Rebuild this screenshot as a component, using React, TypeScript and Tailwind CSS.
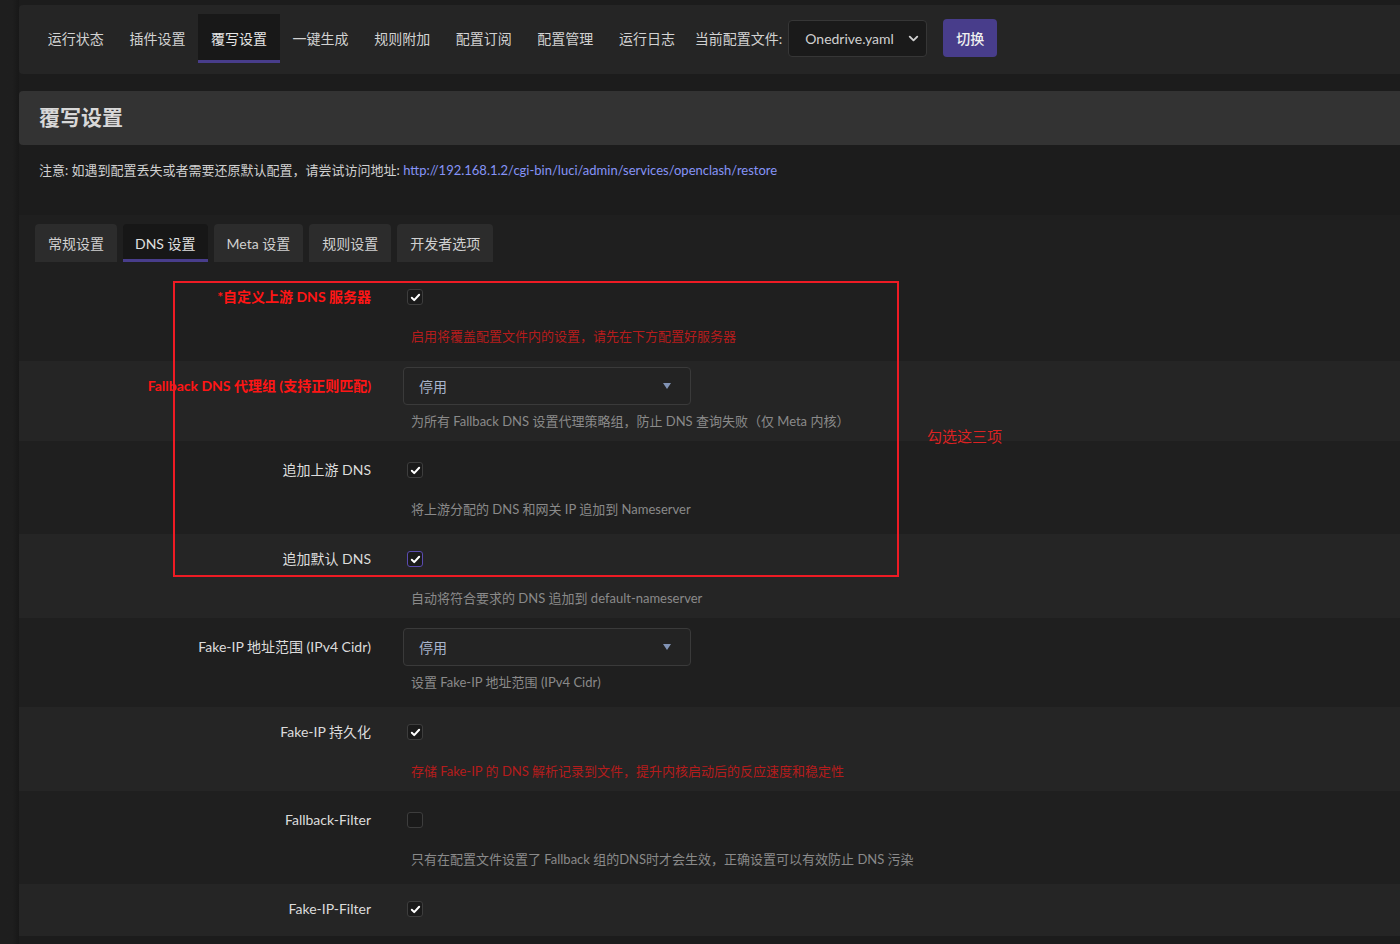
import { ChevronDown } from 'lucide-react';

interface Row {
  label: string;
  red?: boolean;
  type: 'check' | 'select';
  checked?: boolean;
  focus?: boolean;
  desc?: string;
  descRed?: boolean;
  pad: string;
}

const NAV_TABS = ['运行状态', '插件设置', '覆写设置', '一键生成', '规则附加', '配置订阅', '配置管理', '运行日志'];
const SUB_TABS = ['常规设置', 'DNS 设置', 'Meta 设置', '规则设置', '开发者选项'];

const ROWS: Row[] = [
  { label: '*自定义上游 DNS 服务器', red: true, type: 'check', checked: true, desc: '启用将覆盖配置文件内的设置，请先在下方配置好服务器', descRed: true, pad: 'pt-[16px] pb-[15px] bg-[#1f1f1f]' },
  { label: 'Fallback DNS 代理组 (支持正则匹配)', red: true, type: 'select', desc: '为所有 Fallback DNS 设置代理策略组，防止 DNS 查询失败（仅 Meta 内核）', pad: 'pt-[6px] pb-[10px] bg-[#252525]' },
  { label: '追加上游 DNS', type: 'check', checked: true, desc: '将上游分配的 DNS 和网关 IP 追加到 Nameserver', pad: 'pt-[10px] pb-[15px] bg-[#1f1f1f]' },
  { label: '追加默认 DNS', type: 'check', checked: true, focus: true, desc: '自动将符合要求的 DNS 追加到 default-nameserver', pad: 'pt-[6px] pb-[10px] bg-[#252525]' },
  { label: 'Fake-IP 地址范围 (IPv4 Cidr)', type: 'select', desc: '设置 Fake-IP 地址范围 (IPv4 Cidr)', pad: 'pt-[10px] pb-[15px] bg-[#1f1f1f]' },
  { label: 'Fake-IP 持久化', type: 'check', checked: true, desc: '存储 Fake-IP 的 DNS 解析记录到文件，提升内核启动后的反应速度和稳定性', descRed: true, pad: 'pt-[6px] pb-[10px] bg-[#252525]' },
  { label: 'Fallback-Filter', type: 'check', checked: false, desc: '只有在配置文件设置了 Fallback 组的DNS时才会生效，正确设置可以有效防止 DNS 污染', pad: 'pt-[10px] pb-[15px] bg-[#1f1f1f]' },
  { label: 'Fake-IP-Filter', type: 'check', checked: true, pad: 'pt-[6px] pb-[8px] bg-[#252525]' },
];

const Checkbox = ({ checked, focus }: { checked?: boolean; focus?: boolean }) => (
  <span
    className={`ml-[4px] flex h-[16px] w-[16px] items-center justify-center rounded-[3px] border bg-[#1a1a1a] ${
      focus ? 'border-[#5a4bb0]' : 'border-[#3d3d3d]'
    }`}
  >
    {checked && (
      <svg width="11" height="11" viewBox="0 0 12 12">
        <path d="M2 6.3l2.6 2.6L10 3" fill="none" stroke="#fff" strokeWidth="2.2" strokeLinecap="round" strokeLinejoin="round" />
      </svg>
    )}
  </span>
);

const Select = () => (
  <div className="flex h-[38px] w-[288px] items-center justify-between rounded-[4px] border border-[#3a3a3a] bg-[#232323] pl-[15px] pr-[19px]">
    <span className="text-[14px] text-[#a9b5cc]">停用</span>
    <svg width="8" height="6" viewBox="0 0 8 6">
      <path d="M0 0h8L4 6z" fill="#8193b5" />
    </svg>
  </div>
);

export default function App() {
  return (
    <div className="flex min-h-[944px] bg-[#1c1c1c] font-['Lato','Noto_Sans_CJK_SC',sans-serif] text-[#d4d4d4]">
      <aside className="w-[19px] shrink-0 bg-gradient-to-r from-[#1e1e1e] from-[65%] to-[#181818]" />

      <main className="min-w-0 flex-1 pt-[5px]">
        {/* top nav */}
        <nav className="flex h-[69px] items-center rounded-l-[4px] bg-[#252525] pb-[3px] pl-[16px] text-[14px]">
          {NAV_TABS.map((t) => (
            <span
              key={t}
              className={`flex h-[49px] items-center px-[12.8px] ${
                t === '覆写设置' ? 'border-b-[3px] border-[#483d8b] bg-[#181818] pt-[3px] text-[#e6e6e6]' : 'text-[#d2d2d2]'
              }`}
            >
              {t}
            </span>
          ))}
          <span className="ml-[7px] text-[#d2d2d2]">当前配置文件:</span>
          <div className="ml-[6px] flex h-[37px] w-[139px] items-center justify-between rounded-[4px] border border-[#363636] bg-[#1a1a1a] pl-[16px] pr-[5px]">
            <span className="text-[14px] text-[#d0d0d0]">Onedrive.yaml</span>
            <ChevronDown size={15} strokeWidth={3} className="text-[#cfcfcf]" />
          </div>
          <button className="ml-[16px] h-[38px] w-[54px] rounded-[4px] bg-[#483d8b] text-[14px] font-medium text-[#f0f0f0]">
            切换
          </button>
        </nav>

        {/* page header */}
        <h2 className="mt-[17px] flex h-[54px] items-center rounded-l-[4px] bg-[#333333] pb-[3px] pl-[20px] text-[21px] font-bold text-[#d8d8d8]">
          覆写设置
        </h2>

        <p className="h-[70px] pl-[20px] pt-[15px] text-[13px] leading-[20px] text-[#d0d0d0]">
          注意: 如遇到配置丢失或者需要还原默认配置，请尝试访问地址:{' '}
          <a className="text-[#8694f7]">http://192.168.1.2/cgi-bin/luci/admin/services/openclash/restore</a>
        </p>

        {/* settings section */}
        <section className="bg-[#1f1f1f]">
          <div className="flex gap-[6px] pl-[16px] pt-[9px] text-[14px]">
            {SUB_TABS.map((t) => (
              <span
                key={t}
                className={`flex h-[38px] items-center rounded-t-[4px] ${
                  t === 'DNS 设置' ? 'border-b-[3px] border-[#483d8b] bg-[#171717] px-[12px] pt-[3px] text-[#e0e0e0]' : 'bg-[#2c2c2c] px-[13px] text-[#d0d0d0]'
                }`}
              >
                {t}
              </span>
            ))}
          </div>

          <div className="relative">
            {ROWS.map((r) => (
              <div key={r.label} className={`flex gap-[32px] ${r.pad}`}>
                <div className="flex h-[38px] w-[352px] shrink-0 items-center justify-end pb-[2px]">
                  <span className={r.red ? 'text-[14px] font-bold text-[#ff1515]' : 'text-[14px] text-[#dcdcdc]'}>{r.label}</span>
                </div>
                <div className="flex flex-col">
                  <div className="flex h-[38px] items-center">
                    {r.type === 'select' ? <Select /> : <Checkbox checked={r.checked} focus={r.focus} />}
                  </div>
                  {r.desc && (
                    <p
                      className={`pl-[8px] text-[13px] leading-[20px] ${r.type === 'select' ? 'mt-[6px]' : 'mt-[10px]'} ${
                        r.descRed ? 'text-[#b51c1c]' : 'text-[#8a8a8a]'
                      }`}
                    >
                      {r.desc}
                    </p>
                  )}
                </div>
              </div>
            ))}

            {/* annotation overlay */}
            <div className="pointer-events-none absolute left-[154px] top-[19px] h-[296px] w-[726px] border-2 border-[#ee1b24]" />
            <span className="absolute left-[908px] top-[164px] text-[15px] leading-[20px] text-[#dc2222]">勾选这三项</span>
          </div>
        </section>
      </main>
    </div>
  );
}
